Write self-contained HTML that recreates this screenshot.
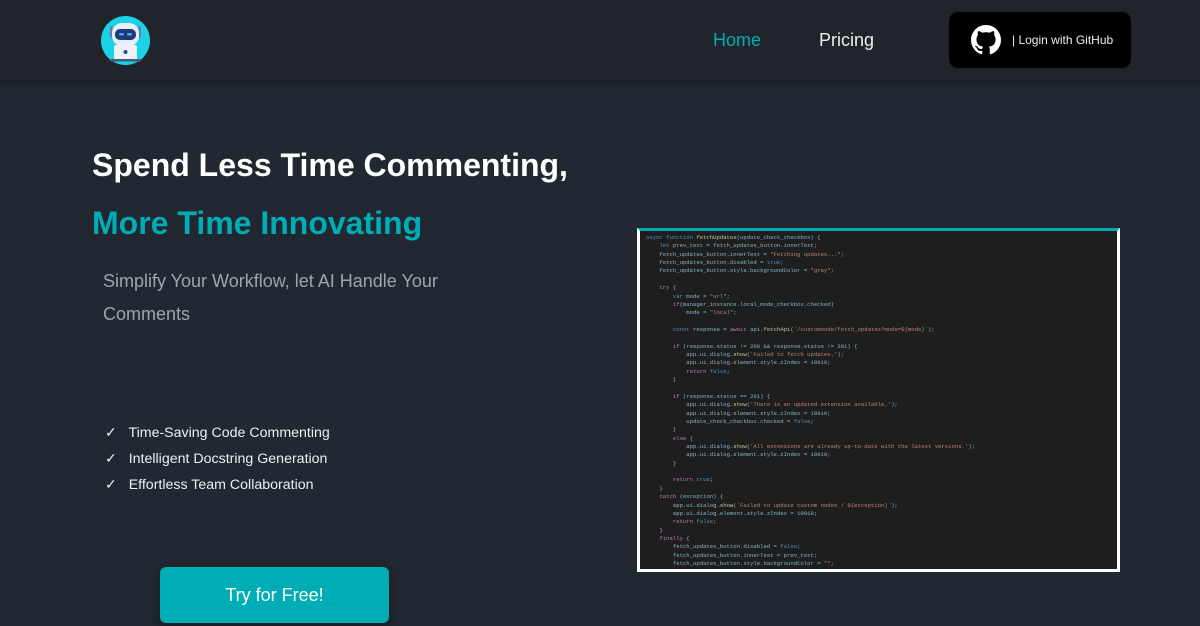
<!DOCTYPE html>
<html><head><meta charset="utf-8"><style>
*{margin:0;padding:0;box-sizing:border-box}
body{width:1200px;height:626px;background:#222831;font-family:"Liberation Sans",sans-serif;position:relative;overflow:hidden}
.hdr{position:absolute;left:0;top:0;width:1200px;height:80px;background:#20252c;box-shadow:0 2px 6px rgba(0,0,0,.35)}
.nav{position:absolute;top:30px;font-size:18px}
.gh{position:absolute;left:949px;top:12px;width:182px;height:56px;background:#000;border-radius:9px;color:#eee;font-size:12px}
h1{position:absolute;left:92px;font-size:32px;font-weight:bold;white-space:nowrap}
.sub{position:absolute;left:103px;top:265px;width:380px;color:#a0a4aa;font-size:18px;line-height:33px}
.li{position:absolute;left:105px;color:#eee;font-size:14.2px}
.btn{position:absolute;left:160px;top:567px;width:229px;height:56px;background:#00adb5;border-radius:6px;color:#fff;font-size:18px;text-align:center;line-height:56px;box-shadow:0 4px 14px rgba(0,0,0,.4)}
.img{position:absolute;left:637px;top:228px;width:483px;height:344px;background:#1e1e1e;border:3px solid #fff;border-top:3px solid #00adb5}
pre{position:absolute;left:6px;top:3px;font-family:"Liberation Mono",monospace;font-size:5.6px;line-height:8.36px;color:#8cc4e0;opacity:.9}
.k{color:#569cd6}.s{color:#ce9178}.f{color:#dcdcaa}.c{color:#c586c0}
</style></head><body>
<div class="hdr">
<svg style="position:absolute;left:101px;top:16px" width="49" height="49" viewBox="0 0 49 49">
<circle cx="24.5" cy="24.5" r="24.5" fill="#1ad3e6"/>
<rect x="9" y="10" width="2.5" height="12" rx="1" fill="#6a7ab0"/><rect x="37.5" y="10" width="2.5" height="12" rx="1" fill="#6a7ab0"/>
<rect x="11" y="7" width="27" height="23" rx="10" fill="#e8eef6"/>
<rect x="14" y="13" width="21" height="11" rx="5" fill="#1e3a78"/>
<rect x="18" y="17" width="5" height="2.5" rx="1" fill="#4aa3ff"/><rect x="26" y="17" width="5" height="2.5" rx="1" fill="#4aa3ff"/>
<rect x="13" y="29" width="23" height="15" rx="2" fill="#eef2f8"/>
<circle cx="24.5" cy="36" r="2" fill="#2a4a9a"/>
<rect x="9" y="43" width="31" height="2.5" rx="1" fill="#4a5a7a"/>
</svg>
<div class="nav" style="left:713px;color:#00adb5">Home</div>
<div class="nav" style="left:819px;color:#eee">Pricing</div>
<div class="gh">
<svg style="position:absolute;left:22px;top:13px" width="30" height="30" viewBox="0 0 16 16"><path fill="#fff" d="M8 0C3.58 0 0 3.58 0 8c0 3.540 2.29 6.53 5.47 7.59.4.07.55-.17.55-.38 0-.19-.01-.82-.01-1.49-2.01.37-2.53-.49-2.690-.94-.09-.23-.48-.94-.82-1.13-.28-.15-.68-.52-.01-.53.63-.01 1.08.58 1.23.82.72 1.21 1.87.87 2.33.66.07-.52.28-.87.51-1.07-1.78-.2-3.64-.89-3.64-3.95 0-.87.31-1.59.82-2.15-.08-.2-.36-1.02.08-2.12 0 0 .67-.21 2.2.82.64-.18 1.32-.27 2-.27.68 0 1.36.09 2 .27 1.53-1.04 2.2-.82 2.2-.82.44 1.1.16 1.92.08 2.12.51.56.82 1.27.82 2.15 0 3.07-1.87 3.75-3.65 3.95.29.25.54.73.54 1.48 0 1.07-.01 1.93-.01 2.2 0 .21.15.46.55.38A8.013 8.013 0 0016 8c0-4.42-3.58-8-8-8z"/></svg>
<span style="position:absolute;left:63px;top:21px">| Login with GitHub</span>
</div>
</div>
<h1 style="top:147px;color:#fff">Spend Less Time Commenting,</h1>
<h1 style="top:205px;color:#00adb5">More Time Innovating</h1>
<div class="sub">Simplify Your Workflow, let AI Handle Your Comments</div>
<div class="li" style="top:425px">✓&nbsp;&nbsp; Time-Saving Code Commenting</div>
<div class="li" style="top:451px">✓&nbsp;&nbsp; Intelligent Docstring Generation</div>
<div class="li" style="top:477px">✓&nbsp;&nbsp; Effortless Team Collaboration</div>
<div class="btn">Try for Free!</div>
<div class="img"><pre><span class="k">async function</span> <span class="f">fetchUpdates</span>(update_check_checkbox) {
    <span class="k">let</span> prev_text = fetch_updates_button.innerText;
    fetch_updates_button.innerText = <span class="s">"Fetching updates..."</span>;
    fetch_updates_button.disabled = <span class="k">true</span>;
    fetch_updates_button.style.backgroundColor = <span class="s">"gray"</span>;

    <span class="c">try</span> {
        <span class="k">var</span> mode = <span class="s">"url"</span>;
        <span class="c">if</span>(manager_instance.local_mode_checkbox.checked)
            mode = <span class="s">"local"</span>;

        <span class="k">const</span> response = <span class="c">await</span> api.<span class="f">fetchApi</span>(<span class="s">`/customnode/fetch_updates?mode=${mode}`</span>);

        <span class="c">if</span> (response.status != 200 &amp;&amp; response.status != 201) {
            app.ui.dialog.<span class="f">show</span>(<span class="s">'Failed to fetch updates.'</span>);
            app.ui.dialog.element.style.zIndex = 10010;
            <span class="c">return</span> <span class="k">false</span>;
        }

        <span class="c">if</span> (response.status == 201) {
            app.ui.dialog.<span class="f">show</span>(<span class="s">'There is an updated extension available.'</span>);
            app.ui.dialog.element.style.zIndex = 10010;
            update_check_checkbox.checked = <span class="k">false</span>;
        }
        <span class="c">else</span> {
            app.ui.dialog.<span class="f">show</span>(<span class="s">'All extensions are already up-to-date with the latest versions.'</span>);
            app.ui.dialog.element.style.zIndex = 10010;
        }

        <span class="c">return</span> <span class="k">true</span>;
    }
    <span class="c">catch</span> (exception) {
        app.ui.dialog.<span class="f">show</span>(<span class="s">`Failed to update custom nodes / ${exception}`</span>);
        app.ui.dialog.element.style.zIndex = 10010;
        <span class="c">return</span> <span class="k">false</span>;
    }
    <span class="c">finally</span> {
        fetch_updates_button.disabled = <span class="k">false</span>;
        fetch_updates_button.innerText = prev_text;
        fetch_updates_button.style.backgroundColor = <span class="s">""</span>;</pre></div>
</body></html>
